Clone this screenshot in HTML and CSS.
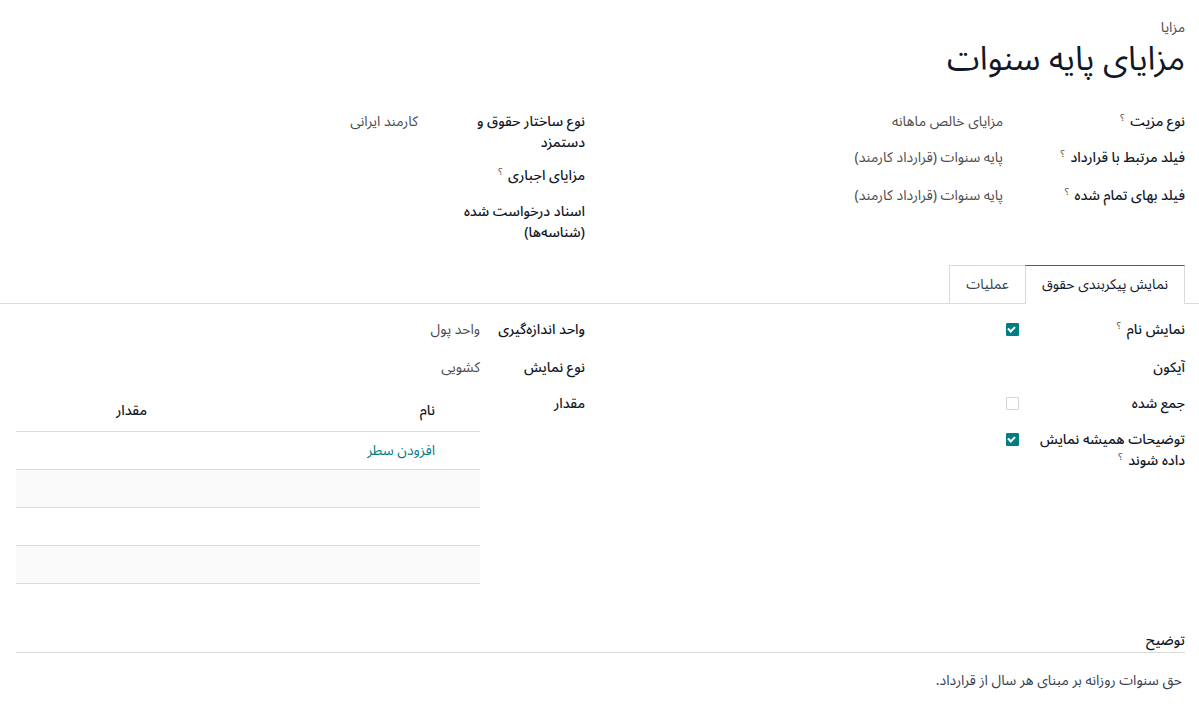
FILE: index.html
```html
<!DOCTYPE html>
<html lang="fa" dir="rtl">
<head>
<meta charset="utf-8">
<link rel="stylesheet" href="styles.css">
</head>
<body>
<div class="sheet">
  <div class="breadcrumb">مزایا</div>
  <h1 class="title">مزایای پایه سنوات</h1>

  <div class="groups">
    <div class="group group-r">
      <div class="row"><div class="lbl">نوع مزیت <sup>؟</sup></div><div class="val">مزایای خالص ماهانه</div></div>
      <div class="row"><div class="lbl">فیلد مرتبط با قرارداد <sup>؟</sup></div><div class="val">پایه سنوات (قرارداد کارمند)</div></div>
      <div class="row"><div class="lbl">فیلد بهای تمام شده <sup>؟</sup></div><div class="val">پایه سنوات (قرارداد کارمند)</div></div>
    </div>
    <div class="group group-l">
      <div class="row"><div class="lbl">نوع ساختار حقوق و دستمزد</div><div class="val">کارمند ایرانی</div></div>
      <div class="row"><div class="lbl">مزایای اجباری <sup>؟</sup></div><div class="val"></div></div>
      <div class="row"><div class="lbl">اسناد درخواست شده (شناسه‌ها)</div><div class="val"></div></div>
    </div>
  </div>

  <div class="tabs">
    <div class="tab active">نمایش پیکربندی حقوق</div>
    <div class="tab">عملیات</div>
  </div>

  <div class="tabbody">
    <div class="group group-cr">
      <div class="row"><div class="lbl">نمایش نام <sup>؟</sup></div><div class="val"><span class="cb on"></span></div></div>
      <div class="row"><div class="lbl">آیکون</div><div class="val"></div></div>
      <div class="row"><div class="lbl">جمع شده</div><div class="val"><span class="cb"></span></div></div>
      <div class="row"><div class="lbl">توضیحات همیشه نمایش داده شوند <sup>؟</sup></div><div class="val"><span class="cb on"></span></div></div>
    </div>
    <div class="group group-cl">
      <div class="row"><div class="lbl">واحد اندازه‌گیری</div><div class="val">واحد پول</div></div>
      <div class="row"><div class="lbl">نوع نمایش</div><div class="val">کشویی</div></div>
      <div class="row last"><div class="lbl">مقدار</div><div class="val"></div></div>
      <table class="lines">
        <thead><tr><th class="c-name">نام</th><th class="c-val">مقدار</th></tr></thead>
        <tbody>
          <tr><td class="c-name"><span class="add">افزودن سطر</span></td><td></td></tr>
          <tr class="alt"><td></td><td></td></tr>
          <tr><td></td><td></td></tr>
          <tr class="alt"><td></td><td></td></tr>
        </tbody>
      </table>
    </div>
  </div>

  <div class="desc-head">توضیح</div>
  <div class="desc">حق سنوات روزانه بر مبنای هر سال از قرارداد.</div>
</div>
</body>
</html>
```

FILE: styles.css
```css
html, body {
  margin: 0;
  padding: 0;
  background: #ffffff;
}
body {
  font-family: "Noto Sans Arabic", "DejaVu Sans", sans-serif;
  font-size: 14px;
  color: #212529;
  line-height: 21px;
}
.sheet {
  padding: 0 14px 0 16px;
}
.breadcrumb {
  padding-top: 19px;
  font-size: 14px;
  line-height: 17px;
  color: #4d4d4d;
}
.title {
  margin: 3px 0 0 0;
  font-size: 33px;
  line-height: 42px;
  font-weight: 400;
  color: #111827;
}
sup {
  font-size: 10px;
  line-height: 10px;
  vertical-align: 5px;
  color: #4d4d4d;
  margin-right: 2px;
  font-weight: 400;
}
.groups {
  display: flex;
  margin-top: 30px;
}
.group {
  display: flex;
  flex-direction: column;
}
.group-r { width: 600px; padding-left: 15px; box-sizing: border-box; }
.group-l { flex: 1; }
.row {
  display: flex;
  align-items: flex-start;
}
.lbl {
  font-weight: 500;
  color: #111827;
}
.val {
  color: #4d4d4d;
}
.group-r .row { padding-bottom: 15px; }
.group-r .row:nth-child(2) { padding-bottom: 17px; }
.group-r .lbl { width: 182px; flex: none; padding-left: 8px; box-sizing: border-box; }
.group-l .row { padding-bottom: 12px; }
.group-l .row:nth-child(2) { padding-bottom: 15px; }
.group-l .lbl { width: 167px; flex: none; padding-left: 35px; box-sizing: border-box; }

.tabs {
  display: flex;
  margin: 10px -14px 0 -16px;
  padding-right: 14px;
  border-bottom: 1px solid #d8dadd;
  height: 38px;
}
.tab {
  padding: 0 16px;
  line-height: 37px;
  border: 1px solid #d8dadd;
  border-bottom: none;
  height: 38px;
  box-sizing: border-box;
  color: #374151;
  background: #fff;
}
.tab.active {
  border-top: 1px solid #714b67;
  height: 39px;
  color: #111827;
}
.tab:not(.active) { border-right: none; }

.tabbody {
  display: flex;
  padding-top: 15px;
}
.group-cr { width: 600px; padding-left: 15px; box-sizing: border-box; }
.group-cl { flex: 1; }
.group-cr .row { padding-bottom: 15px; }
.group-cr .row:first-child { padding-bottom: 17px; }
.group-cr .lbl { width: 166px; flex: none; padding-left: 10px; box-sizing: border-box; }
.group-cl .row { padding-bottom: 15px; }
.group-cl .row:first-child { padding-bottom: 17px; }
.group-cl .row.last { padding-bottom: 0; height: 8px; }
.group-cl .lbl { width: 105px; flex: none; }

.cb {
  display: block;
  width: 13px;
  height: 13px;
  box-sizing: border-box;
  border: 1px solid #d5d5d5;
  border-radius: 1px;
  margin-top: 4px;
  position: relative;
}
.cb.on {
  background: #017e84;
  border-color: #017e84;
}
.cb.on::after {
  content: "";
  position: absolute;
  right: 3px;
  top: 2px;
  width: 5px;
  height: 3px;
  border-left: 2px solid #fff;
  border-bottom: 2px solid #fff;
  transform: rotate(-45deg);
}

.lines {
  width: 464px;
  margin-right: 105px;
  border-collapse: collapse;
}
.lines th {
  text-align: right;
  font-weight: 500;
  color: #111827;
  height: 20px;
  line-height: 20px;
  padding: 0 0 10px 0;
  vertical-align: top;
  border-bottom: 1px solid #d8dadd;
}
.lines th.c-name { padding-right: 45px; width: 288px; }
.lines th.c-val { padding-right: 0; }
.lines td {
  height: 37px;
  padding: 0;
  border-bottom: 1px solid #d8dadd;
}
.lines td.c-name { padding-right: 45px; }
.lines tr.alt td { background: #fafafa; }
.add { color: #017e84; }

.desc-head {
  margin-top: 46px;
  font-weight: 500;
  color: #111827;
  padding-bottom: 1px;
  border-bottom: 1px solid #d8dadd;
}
.desc {
  padding: 17px 3px 0 0;
  color: #374151;
}
```
